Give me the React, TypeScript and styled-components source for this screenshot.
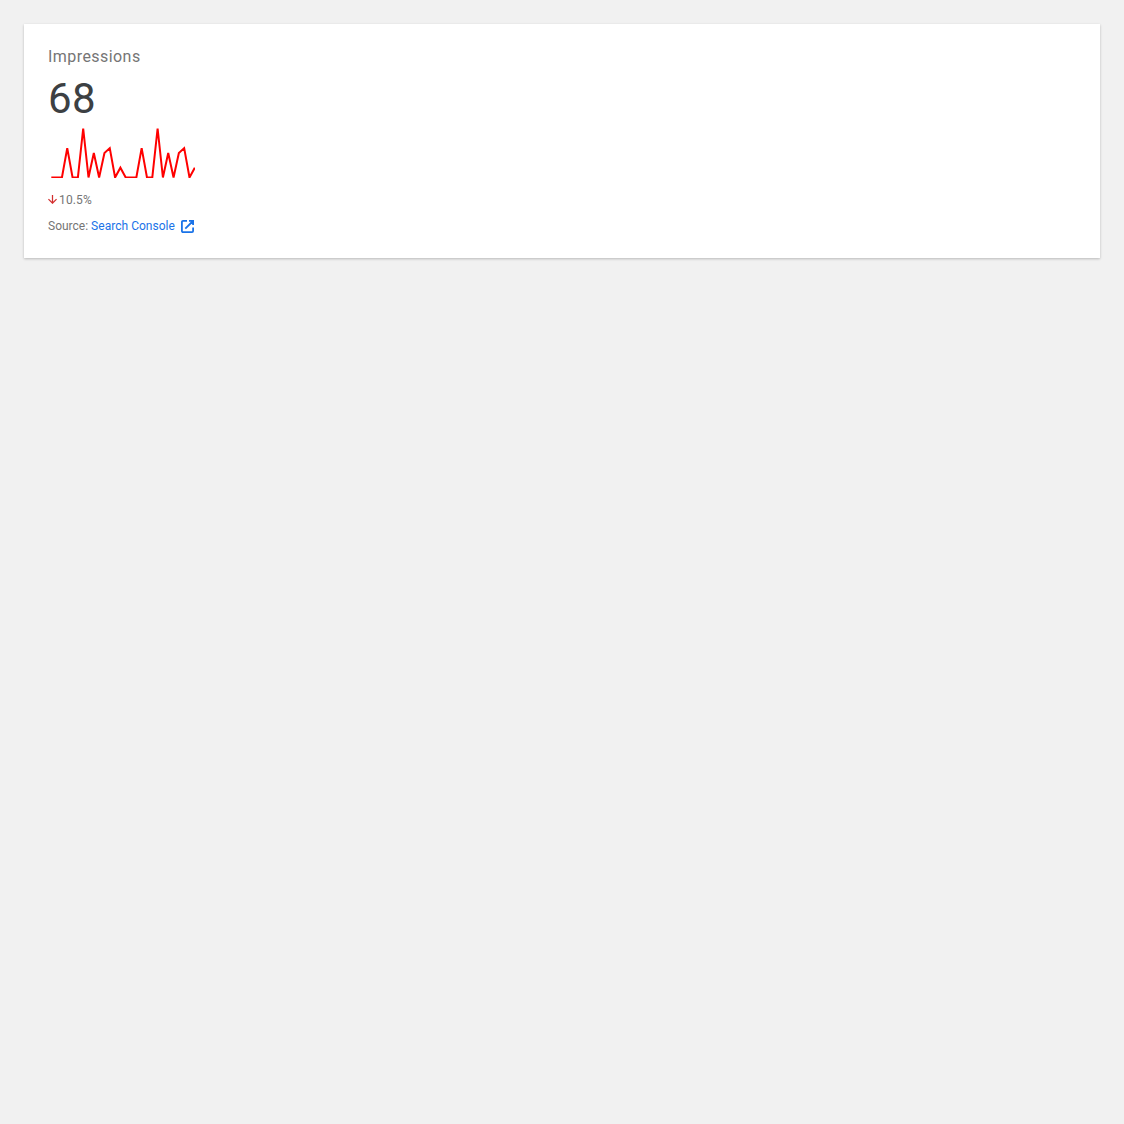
import React from "react";
import styled, { createGlobalStyle } from "styled-components";

const GlobalStyle = createGlobalStyle`
  body { margin: 0; background: #f1f1f1; }
`;

const Page = styled.main`
  padding: 24px;
  font-family: Roboto, sans-serif;
`;

const Card = styled.section`
  box-sizing: border-box;
  height: 234px;
  padding: 24px;
  display: flex;
  flex-direction: column;
  align-items: flex-start;
  background: #fff;
  box-shadow: 0 1px 3px rgba(0, 0, 0, 0.12), 0 1px 2px rgba(0, 0, 0, 0.12);
`;

const Title = styled.h3`
  margin: 0;
  font-size: 16px;
  font-weight: 400;
  line-height: 17px;
  letter-spacing: 0.44px;
  color: #757575;
`;

const Value = styled.div`
  margin-top: 9px;
  font-size: 42px;
  line-height: 50px;
  letter-spacing: 0.3px;
  color: #3c4043;
`;

const Sparkline = styled.svg`
  display: block;
  margin: 3px 0 5px 3px;
  overflow: hidden;
`;

const Change = styled.div`
  display: flex;
  align-items: center;
  gap: 2px;
  margin-top: 9px;
  font-size: 12px;
  line-height: 16px;
  letter-spacing: 0.14px;
  color: #757575;

  svg { margin-bottom: 1px; }
`;

const Source = styled.div`
  display: flex;
  align-items: center;
  margin-top: 10px;
  font-size: 12px;
  line-height: 16px;
  color: #757575;
`;

const SourceLink = styled.a`
  display: inline-flex;
  align-items: center;
  gap: 6px;
  margin-left: 3px;
  letter-spacing: 0.03px;
  color: #1a73e8;
  text-decoration: none;
`;

const series = [0, 0, 0, 6, 0, 0, 10, 0, 5, 0, 5, 6, 0, 2, 0, 0, 0, 6, 0, 0, 10, 0, 5, 0, 5, 6, 0, 2];
const points = series.map((v, i) => `${0.3 + i * 5.315},${50.5 - v * 4.9}`).join(" ");

export default function App() {
  return (
    <Page>
      <GlobalStyle />
      <Card>
        <Title>Impressions</Title>
        <Value>68</Value>
        <Sparkline width="144" height="51">
          <polyline points={points} fill="none" stroke="#f00" strokeWidth="2" />
        </Sparkline>
        <Change>
          <svg width="9" height="9" viewBox="0 0 10 10">
            <path d="M5 0v9M.5 4.600 5 9.100l4.500-4.500" fill="none" stroke="#d32f2f" strokeWidth="1.4" />
          </svg>
          10.5%
        </Change>
        <Source>
          Source:
          <SourceLink href="#">
            Search Console
            <svg width="13" height="13" viewBox="0 0 13 13" fill="none" stroke="currentColor" strokeWidth="1.8">
              <path d="M6 .9H2A1.100 1.100 0 0 0 .9 2v9A1.100 1.100 0 0 0 2 12.100h9a1.100 1.100 0 0 0 1.100-1.100V7.500M8 .9h4.100V5M12 1 4.300 8.700" />
            </svg>
          </SourceLink>
        </Source>
      </Card>
    </Page>
  );
}
